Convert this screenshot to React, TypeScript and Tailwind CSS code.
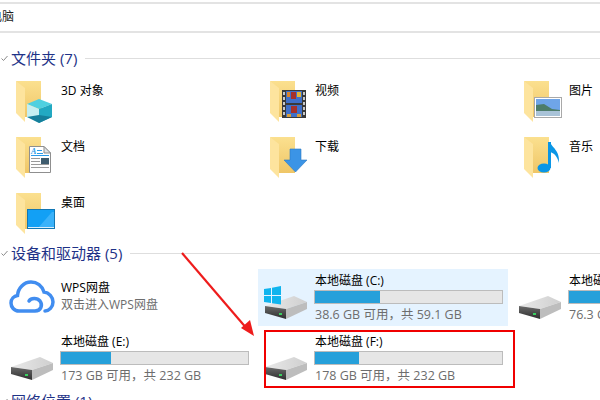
import type { ReactNode } from "react";

const FONT = "font-['Open_Sans','Noto_Sans_CJK_SC',sans-serif]";

function Folder({ children }: { children?: ReactNode }) {
  return (
    <svg width="42" height="44" viewBox="0 0 42 44" className="shrink-0">
      <defs>
        <linearGradient id="panel" x1="0" y1="0" x2="0" y2="1">
          <stop offset="0" stopColor="#fbe08f" />
          <stop offset="1" stopColor="#efc667" />
        </linearGradient>
      </defs>
      <polygon points="0,1 25,1 25,37 9,37" fill="url(#panel)" />
      <polygon points="0,1 9,8 9,42 0,33" fill="#fde49e" />
      {children}
    </svg>
  );
}

function Cube() {
  return (
    <g>
      <polygon points="23,19 36,24 23,29 11,24" fill="#4fd0e0" />
      <polygon points="11,24 23,29 23,43 11,37" fill="#c4eff2" />
      <polygon points="23,29 36,24 36,37 23,43" fill="#22a9c2" />
      <polygon points="11,37 23,35 36,37 23,43" fill="#157f9b" />
    </g>
  );
}

function Film() {
  return (
    <g>
      <rect x="12" y="10" width="24" height="28" fill="#3a3a3a" />
      <rect x="16" y="11" width="16" height="12" fill="#3f70c9" />
      <rect x="16" y="25" width="16" height="12" fill="#3f70c9" />
      <rect x="17" y="12" width="3" height="5" fill="#d9822b" />
      <rect x="21" y="12" width="5" height="7" fill="#a6312a" />
      <rect x="27" y="12" width="4" height="5" fill="#e0b53a" />
      <rect x="21" y="26" width="6" height="7" fill="#a6312a" />
      <rect x="17" y="34" width="4" height="3" fill="#d9a03a" />
      <rect x="27" y="34" width="4" height="3" fill="#d9a03a" />
      {[12, 17, 22, 27, 32].map((y) => (
        <g key={y}>
          <rect x="13" y={y} width="2" height="3" fill="#c9c9c9" />
          <rect x="33" y={y} width="2" height="3" fill="#c9c9c9" />
        </g>
      ))}
    </g>
  );
}

function Picture() {
  return (
    <g>
      <rect x="10.5" y="17.5" width="27" height="20" fill="#fff" stroke="#a9a9a9" />
      <rect x="12" y="19" width="24" height="17" fill="#6fa5e8" />
      <polygon points="12,25 20,24 28,29 36,30 36,36 12,36" fill="#4d7d6a" />
      <rect x="12" y="31" width="24" height="5" fill="#a9c3d8" />
    </g>
  );
}

function Doc() {
  return (
    <g>
      <polygon points="13.5,10.5 28,10.5 34.5,17 34.5,36.5 13.5,36.5" fill="#fff" stroke="#8f8f8f" />
      <polygon points="28,10.5 34.5,17 28,17" fill="#dfe3e6" stroke="#8f8f8f" />
      <text x="15" y="18" fontSize="8" fontStyle="italic" fontWeight="700" fill="#2c9be8" fontFamily="Liberation Serif, serif">A</text>
      <rect x="21" y="14" width="5" height="1" fill="#2c9be8" />
      <rect x="21" y="17" width="6" height="1" fill="#2c9be8" />
      <rect x="15" y="19" width="18" height="1" fill="#2c9be8" />
      <rect x="15" y="22" width="9" height="1" fill="#9a9a9a" />
      <rect x="15" y="25" width="9" height="1" fill="#9a9a9a" />
      <rect x="25" y="22" width="8" height="6" fill="#3f5c6e" />
      <rect x="15" y="28" width="18" height="1" fill="#9a9a9a" />
      <rect x="15" y="31" width="18" height="1" fill="#9a9a9a" />
    </g>
  );
}

function ArrowDown() {
  return <polygon points="20,13 31,13 31,24 37,24 25.5,36 14,24 20,24" fill="#3b94e6" stroke="#2c78c4" strokeWidth="0.6" />;
}

function Note() {
  return (
    <g fill="#0a96e6">
      <ellipse cx="20" cy="32" rx="6.5" ry="4.5" />
      <rect x="24" y="6" width="3" height="26" />
      <path d="M26 6c2 6 10 8 9 21-2-7-5-10-9-11z" />
    </g>
  );
}

function Monitor() {
  return (
    <g>
      <rect x="11.5" y="17.5" width="27" height="19" fill="#12a0f5" stroke="#1277b3" />
      <polygon points="22,36 36,20 38,20 38,36" fill="#3ab2fa" />
      <rect x="12" y="35" width="26" height="1" fill="#d8eefc" />
    </g>
  );
}

function Drive({ win }: { win?: boolean }) {
  return (
    <svg width="44" height="36" viewBox="0 0 44 36" className="shrink-0">
      <defs>
        <linearGradient id="hdtop" x1="0" y1="0" x2="1" y2="0">
          <stop offset="0" stopColor="#e9e9e9" />
          <stop offset="1" stopColor="#cfcfcf" />
        </linearGradient>
        <linearGradient id="hdface" x1="0" y1="0" x2="0" y2="1">
          <stop offset="0" stopColor="#6a6a6a" />
          <stop offset="1" stopColor="#2e2e2e" />
        </linearGradient>
      </defs>
      <g transform="translate(0 11)">
        <polygon points="1,10 30,0 43,6 22,13" fill="url(#hdtop)" />
        <polygon points="22,13 43,6 43,13 22,23" fill="#bdbdbd" />
        <polygon points="1,10 22,13 22,23 1,17" fill="url(#hdface)" />
        <rect x="15" y="17" width="3" height="2" fill="#3ad060" />
      </g>
      {win && (
        <g fill="#10b4ee">
          <polygon points="0,4 7,3 7,10 0,10" />
          <polygon points="8,2.8 17,1 17,10 8,10" />
          <polygon points="0,11 7,11 7,18 0,17" />
          <polygon points="8,11 17,11 17,19.5 8,18.2" />
        </g>
      )}
    </svg>
  );
}

function Heading({ label }: { label: string }) {
  return (
    <div className="flex h-5 items-center">
      <svg width="8" height="8" viewBox="0 0 8 8" className="ml-px shrink-0">
        <path d="M0.5 4.5 2.5 6.5 6.5 2" fill="none" stroke="#8a8a8a" strokeWidth="1" />
      </svg>
      <span className="ml-[2px] whitespace-nowrap text-[15px] leading-5 text-[#1e3287]">{label}</span>
      <div className="ml-2 h-px flex-1 bg-[#dedede]" />
    </div>
  );
}

function FolderItem({ name, children }: { name: string; children?: ReactNode }) {
  return (
    <div className="flex h-14 pl-4">
      <Folder>{children}</Folder>
      <span className="ml-[3px] mt-px text-xs leading-5 text-black">{name}</span>
    </div>
  );
}

function DriveItem({ name, free, pct, win, selected }: { name: string; free: string; pct: number; win?: boolean; selected?: boolean }) {
  return (
    <div className={`flex h-[57px] w-[250px] items-start ${selected ? "bg-[#e5f3ff]" : ""}`}>
      <div className="ml-[6px] mt-[16px]">
        <Drive win={win} />
      </div>
      <div className="ml-[6px] flex w-[189px] flex-col pt-[2px]">
        <span className="pl-px text-xs leading-[19px] text-black">{name}</span>
        <div className="h-[14px] w-[189px] border border-[#bcbcbc] bg-[#e6e6e6]">
          <div className="h-full bg-[#26a0da]" style={{ width: `${pct}%` }} />
        </div>
        <span className="mt-px whitespace-nowrap pl-px text-[12.5px] leading-[20px] text-[#6d6d6d]">{free}</span>
      </div>
    </div>
  );
}

export default function App() {
  return (
    <div className={`relative h-[400px] w-[600px] overflow-hidden bg-white ${FONT}`}>
      <div className="mt-[2px] flex h-[31px] items-center border-y-2 border-[#e3e3e3] pb-[2px]">
        <span className="-ml-[10px] text-xs text-[#222]">电脑</span>
      </div>

      <div className="mt-[15px]">
        <Heading label="文件夹 (7)" />
      </div>
      <div className="mt-[12px] grid w-[762px] grid-cols-[254px_254px_254px]">
        <FolderItem name="3D 对象"><Cube /></FolderItem>
        <FolderItem name="视频"><Film /></FolderItem>
        <FolderItem name="图片"><Picture /></FolderItem>
        <FolderItem name="文档"><Doc /></FolderItem>
        <FolderItem name="下载"><ArrowDown /></FolderItem>
        <FolderItem name="音乐"><Note /></FolderItem>
        <FolderItem name="桌面"><Monitor /></FolderItem>
      </div>

      <div className="-mt-[5px]">
        <Heading label="设备和驱动器 (5)" />
      </div>
      <div className="mt-[6px] grid w-[766px] grid-cols-[250px_250px_250px] gap-1 pl-1">
        <div className="flex h-[57px] w-[250px]">
          <svg width="46" height="34" viewBox="0 0 46 34" className="ml-[5px] mt-[11px] shrink-0">
            <path
              d="M20 21C22 18 28 17.500 31 21 34 25 32 31 26 31H10C5 31 2 27 2 23 2 19 5 16 8.500 15.500 9 8 15 2 22 2 28 2 33 6 35 12 40 12.500 44 17 44 22 44 27 40 31 36 31"
              fill="none"
              stroke="#418df0"
              strokeWidth="3.500"
              strokeLinecap="round"
            />
          </svg>
          <div className="ml-[6px] flex flex-col pt-[9px]">
            <span className="text-xs leading-[19px] text-black">WPS网盘</span>
            <span className="text-xs leading-[16px] text-[#6d6d6d]">双击进入WPS网盘</span>
          </div>
        </div>
        <DriveItem name="本地磁盘 (C:)" free="38.6 GB 可用，共 59.1 GB" pct={35} win selected />
        <DriveItem name="本地磁盘 (D:)" free="76.3 GB 可用，共 232 GB" pct={30} />
        <DriveItem name="本地磁盘 (E:)" free="173 GB 可用，共 232 GB" pct={26.500} />
        <DriveItem name="本地磁盘 (F:)" free="178 GB 可用，共 232 GB" pct={23.500} />
      </div>

      <div className="mt-[4px]">
        <Heading label="网络位置 (1)" />
      </div>

      {/* annotation drawn over the screenshot */}
      <div className="absolute left-[264px] top-[330px] h-[58px] w-[251px] border-2 border-[#f00000]" />
      <svg width="600" height="400" viewBox="0 0 600 400" className="pointer-events-none absolute left-0 top-0">
        <line x1="182" y1="253" x2="248" y2="330" stroke="#ee1c1c" strokeWidth="2.200" />
        <polygon points="254,336 241,328 250,320" fill="#ee1c1c" />
      </svg>
    </div>
  );
}
